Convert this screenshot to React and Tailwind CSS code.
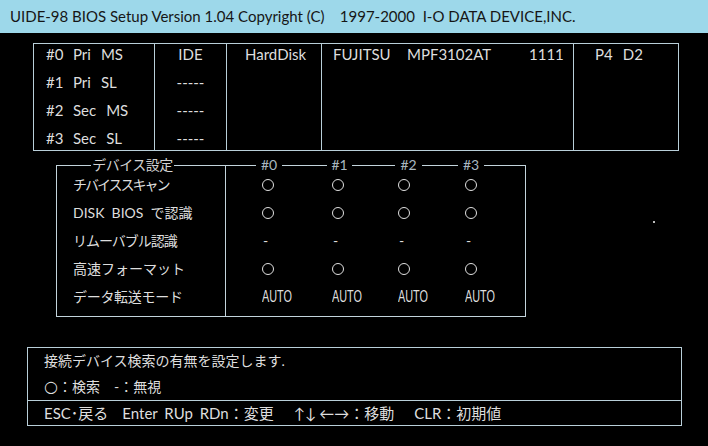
import React from 'react';

const font = "Lato, 'Noto Sans CJK JP', sans-serif";

const drives = [
    { no: '#0', port: 'Pri', role: 'MS', type: 'IDE' },
    { no: '#1', port: 'Pri', role: 'SL', type: '-----' },
    { no: '#2', port: 'Sec', role: 'MS', type: '-----' },
    { no: '#3', port: 'Sec', role: 'SL', type: '-----' },
];

// 'o' = enabled, '-' = not used, otherwise a text value
const settings = [
    { label: 'チバイススキャン', fit: 'tracking-[-2px]', values: ['o', 'o', 'o', 'o'] },
    { label: 'DISK  BIOS  で認識', fit: '', values: ['o', 'o', 'o', 'o'] },
    { label: 'リムーバブル認識', fit: 'tracking-[-1px]', values: ['-', '-', '-', '-'] },
    { label: '高速フォーマット', fit: '', values: ['o', 'o', 'o', 'o'] },
    { label: 'データ転送モード', fit: 'tracking-[-0.3px]', values: ['AUTO', 'AUTO', 'AUTO', 'AUTO'] },
];

function Line({ className = '' }) {
    return <div className={`h-px bg-[#c3d4dc] ${className}`} />;
}

function Cell({ value }) {
    if (value === 'o') {
        return <span className="inline-block w-[12px] h-[12px] rounded-full border border-[#e0e0e0] mt-[4px]" />;
    }
    if (value === '-') {
        return <span className="inline-block pl-[1px]">-</span>;
    }
    return (
        <span className="inline-block origin-left scale-x-[0.64] text-[17px] font-['Liberation_Sans']">
            {value}
        </span>
    );
}

export default function App() {
    return (
        <div className="w-[708px] h-[446px] bg-black overflow-hidden text-[#dedede]" style={{ fontFamily: font }}>
            {/* title bar */}
            <div className="h-[33px] bg-[#9dd8ea] flex items-center pl-[10px] text-[15px] text-[#161616] whitespace-pre">
                UIDE-98 BIOS Setup Version 1.04 Copyright (C)    1997-2000  I-O DATA DEVICE,INC.
            </div>

            {/* drive table */}
            <div className="mt-[10px] ml-[33px] w-[646px] h-[108px] border border-[#b9cfd9] grid grid-cols-[120px_72px_95px_252px_105px] text-[15px] leading-[20px]">
                <div className="flex flex-col gap-[8px] pl-[12px]">
                    {drives.map((d) => (
                        <div key={d.no} className="flex gap-[10px]">
                            <span className="w-[17px]">{d.no}</span>
                            <span>{d.port}</span>
                            <span>{d.role}</span>
                        </div>
                    ))}
                </div>
                <div className="border-l border-[#b9cfd9] flex flex-col gap-[8px] items-center">
                    {drives.map((d) => (
                        <div key={d.no}>{d.type}</div>
                    ))}
                </div>
                <div className="border-l border-[#b9cfd9] pl-[18px]">HardDisk</div>
                <div className="border-l border-[#b9cfd9] pl-[11px] grid grid-cols-[74px_122px_1fr] content-start">
                    <span>FUJITSU</span>
                    <span>MPF3102AT</span>
                    <span>1111</span>
                </div>
                <div className="border-l border-[#b9cfd9] pl-[21px] flex gap-[10px] items-start">
                    <span>P4</span>
                    <span>D2</span>
                </div>
            </div>

            {/* device settings */}
            <div className="flex mt-[14px]">
                <div className="ml-[56px] w-[470px] border-l border-r border-b border-[#c3d4dc] text-[14px] leading-[20px]">
                    <div className="relative z-10 h-[20px] -mt-[10px] flex items-center">
                        <Line className="w-[34px]" />
                        <div className="w-[83px] text-center text-[#d2d2d2] whitespace-nowrap tracking-[-0.5px]">デバイス設定</div>
                        <Line className="w-[82px]" />
                        <div className="w-[26px] text-center text-[#a9b8c0]">#0</div>
                        <Line className="w-[45px]" />
                        <div className="w-[25px] text-center text-[#a9b8c0]">#1</div>
                        <Line className="w-[43px]" />
                        <div className="w-[27px] text-center text-[#a9b8c0]">#2</div>
                        <Line className="w-[36px]" />
                        <div className="w-[26px] text-center text-[#a9b8c0]">#3</div>
                        <Line className="flex-1" />
                    </div>
                    <div className="grid grid-cols-[169px_1fr] -mt-[10px] h-[151px]">
                        <div className="border-r border-[#c3d4dc] pt-[10px] pl-[16px] flex flex-col gap-[8px] whitespace-pre">
                            {settings.map((s) => (
                                <div key={s.label} className={s.fit}>{s.label}</div>
                            ))}
                        </div>
                        <div className="pt-[10px] pl-[36px] flex flex-col gap-[8px]">
                            {settings.map((s) => (
                                <div key={s.label} className="grid grid-cols-[70px_66px_67px_1fr] h-[20px]">
                                    {s.values.map((v, i) => (
                                        <div key={i}>
                                            <Cell value={v} />
                                        </div>
                                    ))}
                                </div>
                            ))}
                        </div>
                    </div>
                </div>
                <div className="ml-[127px] mt-[56px] w-[2px] h-[2px] bg-[#bbbbbb]" />
            </div>

            {/* help box */}
            <div className="mt-[30px] ml-[27px] w-[655px] border border-[#b9cfd9] text-[14px] leading-[20px]">
                <div className="border-b border-[#b9cfd9] pl-[16px] pt-[3px] pb-[3px] flex flex-col gap-[6px] whitespace-pre">
                    <div>接続デバイス検索の有無を設定します.</div>
                    <div className="flex items-center">
                        <span className="font-['DejaVu_Sans'] text-[16px] leading-[20px]">○</span>
                        <span>：検索　-：無視</span>
                    </div>
                </div>
                <div className="pl-[16px] py-[2px] flex whitespace-pre text-[15px]">
                    <span>ESC･戻る</span>
                    <span className="ml-[14px] [word-spacing:3px]">Enter RUp RDn：変更</span>
                    <span className="ml-[20px]">↑↓</span>
                    <span className="ml-[3px]">←→：移動</span>
                    <span className="ml-[20px]">CLR：初期値</span>
                </div>
            </div>
        </div>
    );
}
